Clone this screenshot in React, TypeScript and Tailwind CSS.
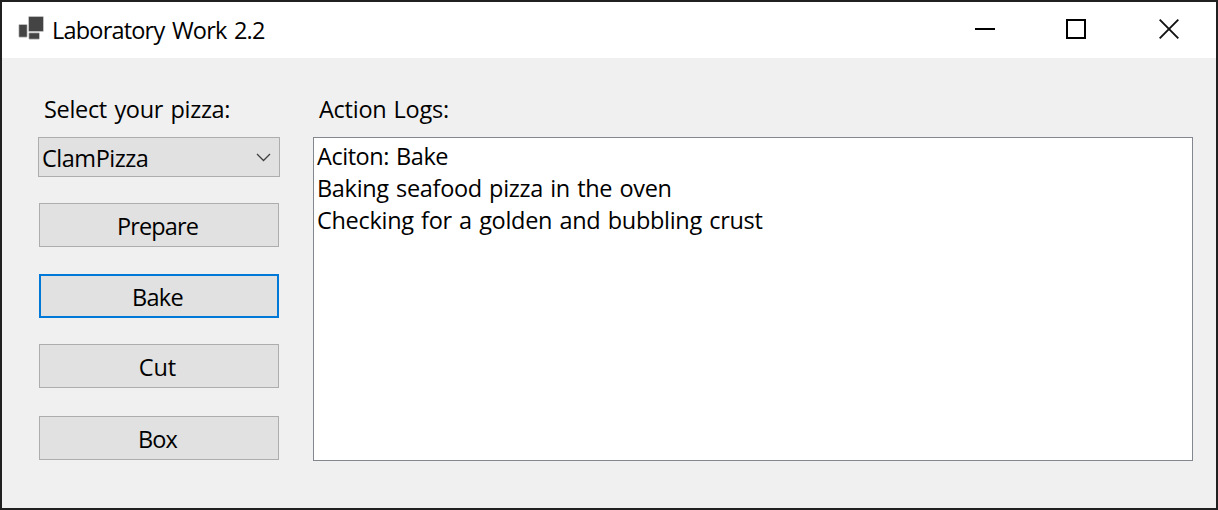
import React from "react";

const actions = [
  { label: "Prepare", spacing: "tracking-[-0.9px]", gap: "mt-[26px]", shift: "pr-[3px]" },
  { label: "Bake", spacing: "tracking-[-0.7px]", gap: "mt-[27px]", shift: "pr-[3px]" },
  { label: "Cut", spacing: "tracking-[-0.1px]", gap: "mt-[26px]", shift: "pr-[3px]" },
  { label: "Box", spacing: "tracking-[-0.8px]", gap: "mt-[28px]", shift: "pr-[3px]" },
];

const logs = [
  { text: "Aciton: Bake", spacing: "tracking-[-0.46px] [word-spacing:1.5px]" },
  { text: "Baking seafood pizza in the oven", spacing: "tracking-[-0.32px] [word-spacing:1.5px]" },
  { text: "Checking for a golden and bubbling crust", spacing: "tracking-[-0.3px] [word-spacing:1.5px]" },
];

function TitleBar() {
  return (
    <header className="flex h-14 shrink-0 items-center bg-white pb-0.5 pl-4">
      <svg width="28" height="28" viewBox="0 0 28 28">
        <g fill="#a8a8a8">
          <rect x="10.3" y="1.3" width="15.4" height="15.4" rx=".8" />
          <rect x=".6" y="9.3" width="8.8" height="13.1" rx=".8" />
          <rect x="10.6" y="17.6" width="11.1" height="6.8" rx=".8" />
        </g>
        <g fill="#444444">
          <rect x="11" y="2" width="14" height="14" />
          <rect x="1.3" y="10" width="7.4" height="11.7" />
          <rect x="11.3" y="18.3" width="9.7" height="5.4" />
        </g>
      </svg>
      <h1 className="ml-1.5 pt-0.5 leading-8 tracking-[-0.8px] [word-spacing:2.2px]">Laboratory Work 2.2</h1>
      <div className="ml-auto flex">
        <button aria-label="Minimize" className="flex h-14 w-[92px] items-center justify-center">
          <svg width="20" height="20" viewBox="0 0 20 20">
            <path d="M0 9h20v2H0z" />
          </svg>
        </button>
        <button aria-label="Maximize" className="flex h-14 w-[90px] items-center justify-center">
          <svg width="20" height="20" viewBox="0 0 20 20" fill="none" stroke="#000" strokeWidth="2">
            <rect x="1" y="1" width="18" height="18" />
          </svg>
        </button>
        <button aria-label="Close" className="flex h-14 w-[95px] items-center justify-center">
          <svg width="20" height="20" viewBox="0 0 20 20" fill="none" stroke="#111" strokeWidth="1.9">
            <path d="M.7.7l18.6 18.6M19.3.7L.7 19.3" />
          </svg>
        </button>
      </div>
    </header>
  );
}

export default function App() {
  return (
    <div className="flex h-[510px] w-[1218px] flex-col border-2 border-[#202020] bg-[#f0f0f0] font-['Open_Sans','Noto_Sans',sans-serif] text-[23.5px] text-black">
      <TitleBar />
      <main className="flex pl-9 pt-[35px]">
        <section className="flex w-[242px] flex-col">
          <label className="h-11 pl-1.5 leading-8 tracking-[-0.32px] [word-spacing:1.7px]">Select your pizza:</label>
          <button className="flex h-10 items-center justify-between border border-[#adadad] bg-[#e1e1e1] pl-[3px] pr-2">
            <span className="pt-0.5 leading-8 tracking-[-0.48px]">ClamPizza</span>
            <svg width="15" height="9" viewBox="0 0 15 9" fill="none" stroke="#404040" strokeWidth="1.3">
              <path d="M1 1l6.5 6.5L14 1" />
            </svg>
          </button>
          {actions.map((a) => (
            <button
              key={a.label}
              className={`mx-px flex h-11 items-center justify-center bg-[#e1e1e1] pt-0.5 leading-8 ${a.gap} ${a.shift} ${a.spacing} ${
                a.label === "Bake" ? "border-2 border-[#0078d7]" : "border border-[#adadad]"
              }`}
            >
              {a.label}
            </button>
          ))}
        </section>
        <section className="ml-[33px] w-[880px]">
          <h2 className="h-11 pl-1.5 leading-8 tracking-[-0.25px] [word-spacing:1.2px]">Action Logs:</h2>
          <div className="h-[324px] border border-[#828790] bg-white pl-[3px] pt-0.5">
            {logs.map((l) => (
              <p key={l.text} className="h-8 leading-8">
                <span className={l.spacing}>{l.text}</span>
              </p>
            ))}
          </div>
        </section>
      </main>
    </div>
  );
}
